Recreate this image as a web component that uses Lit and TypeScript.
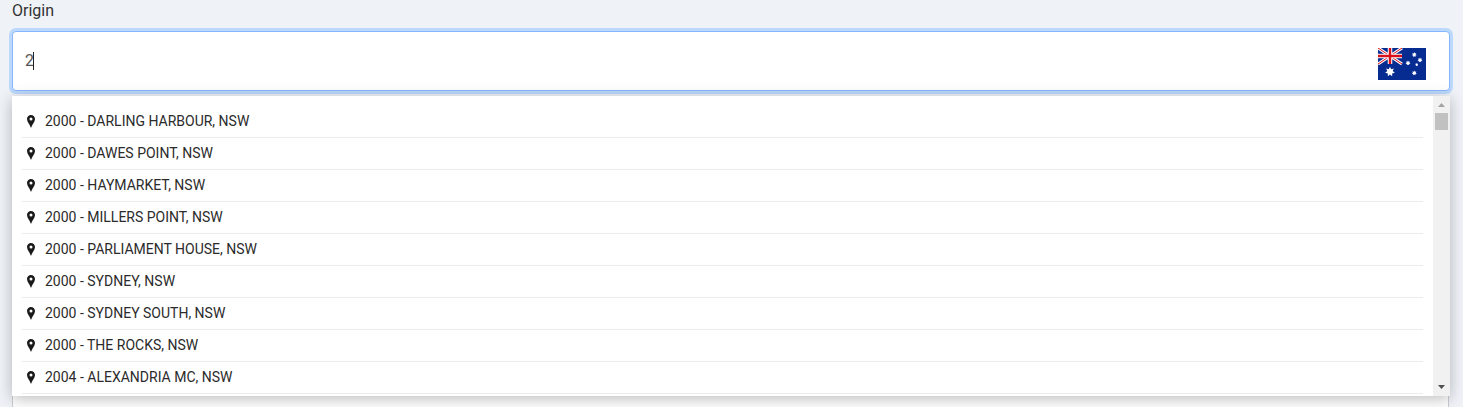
import { LitElement, html, css, svg } from "lit";
import { customElement } from "lit/decorators.js";

const ITEMS = [
  "2000 - DARLING HARBOUR, NSW",
  "2000 - DAWES POINT, NSW",
  "2000 - HAYMARKET, NSW",
  "2000 - MILLERS POINT, NSW",
  "2000 - PARLIAMENT HOUSE, NSW",
  "2000 - SYDNEY, NSW",
  "2000 - SYDNEY SOUTH, NSW",
  "2000 - THE ROCKS, NSW",
  "2004 - ALEXANDRIA MC, NSW",
];

const star = (cx: number, cy: number, r: number) => {
  const pts: string[] = [];
  for (let i = 0; i < 14; i++) {
    const a = (Math.PI * i) / 7 - Math.PI / 2;
    const rr = i % 2 ? r * 0.55 : r;
    pts.push(`${(cx + rr * Math.cos(a)).toFixed(2)},${(cy + rr * Math.sin(a)).toFixed(2)}`);
  }
  return svg`<polygon points=${pts.join(" ")} fill="#fff"/>`;
};

@customElement("app-root")
export class AppRoot extends LitElement {
  static styles = css`
    :host {
      display: block;
      width: 1463px;
      height: 407px;
      overflow: hidden;
      background: #eff2f7;
      font-family: Roboto, "Liberation Sans", sans-serif;
      color: #212529;
      box-sizing: border-box;
      padding: 0 13px 0 12px;
    }
    .label {
      font-size: 16px;
      line-height: 21px;
      color: #333;
      height: 21px;
    }
    .input {
      margin-top: 10px;
      height: 60px;
      box-sizing: border-box;
      background: #fff;
      border: 1px solid #86b7fe;
      border-radius: 4px;
      box-shadow: 0 0 0 3px #bcd8fc;
      display: flex;
      align-items: center;
      justify-content: space-between;
      padding: 0 23px 1px 12px;
      font-size: 16px;
      color: #555;
    }
    .value {
      display: flex;
      align-items: center;
    }
    .caret {
      width: 1px;
      height: 18px;
      margin-left: -1px;
      background: #222;
    }
    .flag {
      display: block;
      width: 48px;
      height: 32px;
      margin-top: 7px;
    }
    .stack {
      position: relative;
      margin-top: 5px;
    }
    .next {
      position: absolute;
      left: 0;
      right: 1px;
      top: 299px;
      height: 40px;
      background: #fff;
      border: 1px solid #c9cdd2;
      box-sizing: border-box;
    }
    .menu {
      position: relative;
      height: 300px;
      background: #fff;
      display: flex;
      box-shadow: 0 3px 14px rgba(0, 0, 0, 0.26);
    }
    .list {
      flex: 1;
      list-style: none;
      margin: 0;
      padding: 10px 10px 0 10px;
      overflow: hidden;
    }
    .item {
      height: 32px;
      box-sizing: border-box;
      border-bottom: 1px solid #ececec;
      display: flex;
      align-items: center;
      gap: 10px;
      padding: 0 0 1px 5px;
      font-size: 14px;
      color: #2b2b2b;
    }
    .pin {
      width: 8px;
      height: 13px;
      margin-top: 1px;
      display: block;
      flex: none;
    }
    .scroll {
      width: 17px;
      background: #f1f1f1;
      display: flex;
      flex-direction: column;
      align-items: center;
      justify-content: space-between;
      flex: none;
    }
    .thumb-wrap {
      display: flex;
      flex-direction: column;
      align-items: center;
      width: 100%;
    }
    .arrow {
      display: block;
      width: 7px;
      height: 4px;
      margin: 7px 0 6px;
    }
    .arrow.down {
      margin: 0 0 7px;
    }
    .thumb {
      width: 13px;
      height: 17px;
      background: #c1c1c1;
    }
  `;

  render() {
    return html`
      <div class="label">Origin</div>
      <div class="input">
        <span class="value">2<span class="caret"></span></span>
        <svg class="flag" viewBox="0 0 48 32" aria-hidden="true">
          <rect width="48" height="32" fill="#062c92"/>
          <path d="M0 0L24 16M24 0L0 16" stroke="#fff" stroke-width="3"/>
          <path d="M0 0L24 16M24 0L0 16" stroke="#d8101c" stroke-width="1"/>
          <path d="M12 0V16M0 8H24" stroke="#fff" stroke-width="4.5"/>
          <path d="M12 0V16M0 8H24" stroke="#d8101c" stroke-width="2.4"/>
          ${star(12, 23.7, 5)} ${star(36.3, 6.7, 2.6)} ${star(36.3, 25, 2.6)}
          ${star(30, 15, 2.6)} ${star(42, 12, 2.6)} ${star(38.7, 16.7, 1.7)}
        </svg>
      </div>
      <div class="stack">
        <div class="next"></div>
        <div class="menu">
          <ul class="list">
            ${ITEMS.map(
              (t) => html`<li class="item">
                <svg class="pin" viewBox="0 0 8 13" aria-hidden="true">
                  <path fill="#1a1a1a" fill-rule="evenodd" d="M4 0C1.7 0 0 1.8 0 4.1C0 7 2.9 9.8 4 13C5.1 9.8 8 7 8 4.1C8 1.8 6.3 0 4 0ZM4 2.6A1.5 1.5 0 1 1 4 5.6A1.5 1.5 0 1 1 4 2.6Z"/>
                </svg>
                <span>${t}</span>
              </li>`
            )}
          </ul>
          <div class="scroll">
            <div class="thumb-wrap">
              <svg class="arrow" viewBox="0 0 7 4"><path d="M3.5 0L7 4H0Z" fill="#a3a3a3"/></svg>
              <div class="thumb"></div>
            </div>
            <svg class="arrow down" viewBox="0 0 7 4"><path d="M0 0H7L3.5 4Z" fill="#505050"/></svg>
          </div>
        </div>
      </div>
    `;
  }
}
